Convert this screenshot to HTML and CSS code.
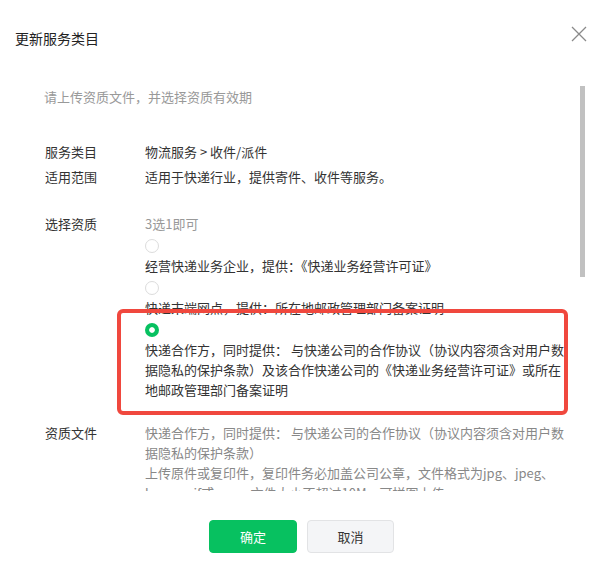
FILE: index.html
```html
<!DOCTYPE html>
<html lang="zh-CN">
  <head>
    <meta charset="utf-8">
    <title>更新服务类目</title>
    <link rel="stylesheet" href="styles.css">
  </head>
  <body>
    <div class="dialog">
      <div class="dialog-header">
        <h3 class="dialog-title">更新服务类目</h3>
        <span class="dialog-close">
          <svg width="16" height="16" viewBox="0 0 16 16">
            <path d="M1 1L15 15M15 1L1 15" stroke="#8a8a8a" stroke-width="1.3" fill="none"/>
          </svg>
        </span>
      </div>

      <div class="dialog-body">
        <p class="hint">请上传资质文件，并选择资质有效期</p>

        <div class="form-group">
          <div class="form-row">
            <div class="form-label">服务类目</div>
            <div class="form-value">物流服务 &gt; 收件/派件</div>
          </div>
          <div class="form-row">
            <div class="form-label">适用范围</div>
            <div class="form-value">适用于快递行业，提供寄件、收件等服务。</div>
          </div>
        </div>

        <div class="form-row form-row-qual">
          <div class="form-label">选择资质</div>
          <div class="form-value">
            <div class="tip">3选1即可</div>
            <label class="option">
              <span class="radio"></span>
              <span class="option-text">经营快递业务企业，提供：《快递业务经营许可证》</span>
            </label>
            <label class="option">
              <span class="radio"></span>
              <span class="option-text">快递末端网点，提供：所在地邮政管理部门备案证明</span>
            </label>
            <label class="option">
              <span class="radio checked"></span>
              <span class="option-text">快递合作方，同时提供： 与快递公司的合作协议（协议内容须含对用户数据隐私的保护条款）及该合作快递公司的《快递业务经营许可证》或所在地邮政管理部门备案证明</span>
            </label>
          </div>
        </div>

        <div class="form-row">
          <div class="form-label">资质文件</div>
          <div class="form-value desc">
            <div>快递合作方，同时提供： 与快递公司的合作协议（协议内容须含对用户数据隐私的保护条款）</div>
            <div>上传原件或复印件，复印件务必加盖公司公章，文件格式为jpg、jpeg、bmp、gif或png，文件大小不超过10M，可拼图上传</div>
          </div>
        </div>
      </div>

      <div class="scroll-thumb"></div>
      <div class="highlight"></div>

      <div class="dialog-footer">
        <button class="btn btn-primary">确定</button>
        <button class="btn btn-default">取消</button>
      </div>
    </div>
  </body>
</html>
```

FILE: styles.css
```css
body {
  margin: 0;
  background: #fff;
  font-family: "Noto Sans CJK SC", "Noto Sans", sans-serif;
  color: #333;
}
.dialog {
  position: relative;
  width: 592px;
  height: 564px;
  background: #fff;
}
.dialog-header {
  height: 80px;
  box-sizing: border-box;
  padding: 29px 0 0 15px;
}
.dialog-title {
  margin: 0;
  font-size: 14px;
  line-height: 18px;
  font-weight: normal;
  color: #222;
}
.dialog-close {
  position: absolute;
  left: 571px;
  top: 23px;
  width: 16px;
  height: 16px;
}
.dialog-body {
  height: 411px;
  overflow: hidden;
  box-sizing: border-box;
  padding: 7px 0 0 45px;
  font-size: 13px;
  line-height: 20px;
}
.hint {
  margin: 0 0 35px -1px;
  color: #999;
}
.form-group {
  margin-bottom: 27px;
}
.form-group .form-row + .form-row {
  margin-top: 5px;
}
.form-row {
  display: flex;
}
.form-row-qual {
  margin-bottom: 23px;
}
.form-label {
  width: 100px;
  flex-shrink: 0;
  color: #333;
}
.form-value {
  width: 424px;
  color: #333;
}
.tip {
  color: #999;
}
.option {
  display: block;
}
.radio {
  display: block;
  width: 14px;
  height: 14px;
  box-sizing: border-box;
  margin: 5px 0 3px;
  border: 1px solid #dcdcdc;
  border-radius: 50%;
}
.radio.checked {
  border: none;
  background: radial-gradient(circle, #fff 2.4px, #07c160 3.2px);
}
.option-text {
  display: block;
}
.desc {
  color: #888;
}
.scroll-thumb {
  position: absolute;
  left: 580px;
  top: 86px;
  width: 5px;
  height: 191px;
  background: #c1c1c1;
}
.highlight {
  position: absolute;
  left: 117px;
  top: 309px;
  width: 451px;
  height: 106px;
  box-sizing: border-box;
  border: 4px solid #f0483e;
  border-radius: 6px;
}
.dialog-footer {
  display: flex;
  justify-content: center;
  gap: 10px;
  padding: 29px 0 0 11px;
}
.btn {
  width: 88px;
  height: 33px;
  border-radius: 4px;
  font-family: inherit;
  font-size: 13px;
  cursor: pointer;
}
.btn-primary {
  background: #07c160;
  border: 1px solid #07c160;
  color: #fff;
}
.btn-default {
  width: 87px;
  background: #f4f5f7;
  border: 1px solid #e2e3e5;
  color: #333;
}
```
